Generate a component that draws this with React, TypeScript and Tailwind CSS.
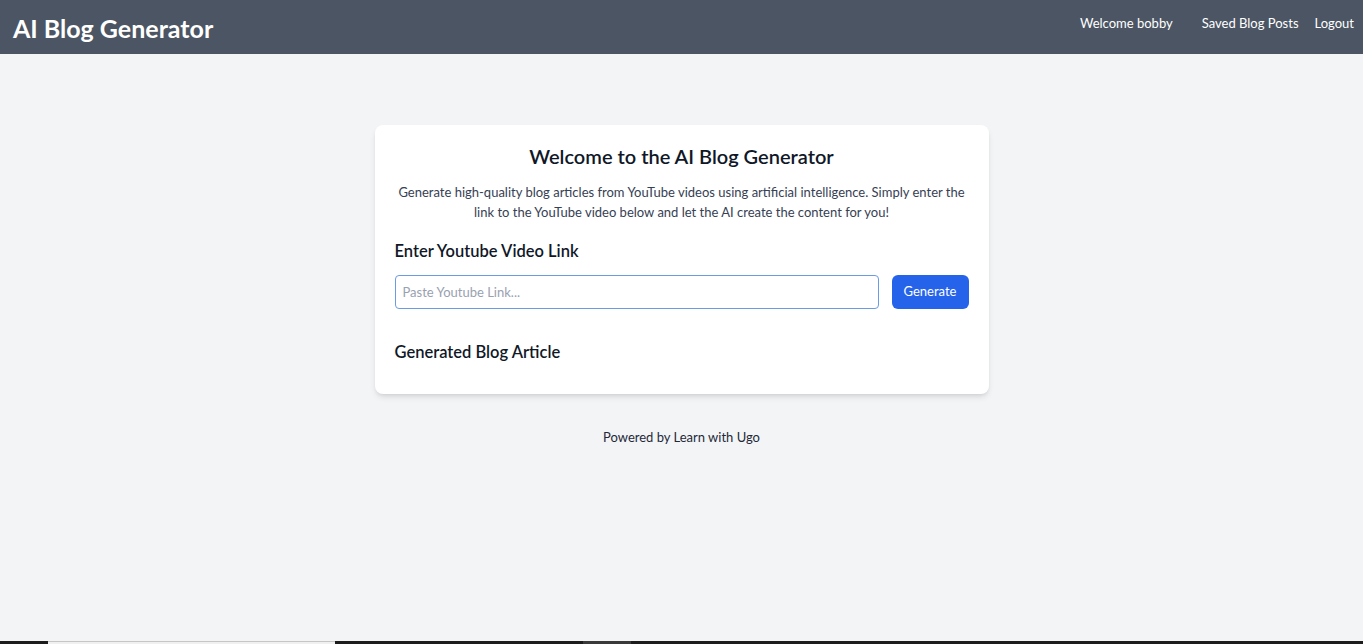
export default function App() {
  return (
    <div className="flex min-h-screen flex-col bg-gray-100 font-['Lato',sans-serif]">
      <nav className="flex h-[54px] items-start justify-between bg-[#4b5563] pl-[13px] pr-[9px] text-white">
        <h1 className="mt-[12px] text-[25px] font-bold leading-8">AI Blog Generator</h1>
        <div className="mt-[13px] flex items-center text-[13px] leading-5">
          <span className="mr-[29px]">Welcome bobby</span>
          <a href="#" className="mr-4 hover:underline">
            Saved Blog Posts
          </a>
          <a href="#" className="hover:underline">
            Logout
          </a>
        </div>
      </nav>

      <main className="mx-auto mt-[71px] w-[614px]">
        <div className="rounded-lg bg-white px-5 pb-7 pt-[17px] shadow-md">
          <div className="text-center">
            <h2 className="mb-3 text-xl font-semibold leading-7 text-gray-900">
              Welcome to the AI Blog Generator
            </h2>
            <p className="text-[13px] leading-5 text-gray-700">
              Generate high-quality blog articles from YouTube videos using artificial intelligence. Simply enter the
              link to the YouTube video below and let the AI create the content for you!
            </p>
          </div>

          <div className="mt-[15px]">
            <h2 className="mb-[10px] text-[16.5px] font-semibold leading-7 text-gray-900">Enter Youtube Video Link</h2>
            <div className="flex">
              <input
                type="text"
                placeholder="Paste Youtube Link..."
                className="h-[34px] flex-1 rounded border border-[#6b9be0] px-[7px] text-[13px] text-gray-800 outline-none placeholder:text-gray-400"
              />
              <button className="ml-[13px] h-[34px] w-[77px] rounded-md bg-[#2563eb] text-[13px] text-white hover:bg-blue-700">
                Generate
              </button>
            </div>
          </div>

          <section className="mt-[29px]">
            <h2 className="text-[16.5px] font-semibold leading-7 text-gray-900">Generated Blog Article</h2>
          </section>
        </div>
      </main>

      <footer className="mt-[33px] text-center text-[13px] leading-5 text-gray-800">Powered by Learn with Ugo</footer>

      <div className="flex-1" />
      <div className="flex h-[3px] bg-[#1c1c1c]">
        <div className="w-[48px]" />
        <div className="w-[287px] border-t border-[#c6c6c6] bg-[#f0f0f0]" />
        <div className="w-[248px]" />
        <div className="w-[48px] bg-[#3a3a3a]" />
      </div>
    </div>
  )
}
